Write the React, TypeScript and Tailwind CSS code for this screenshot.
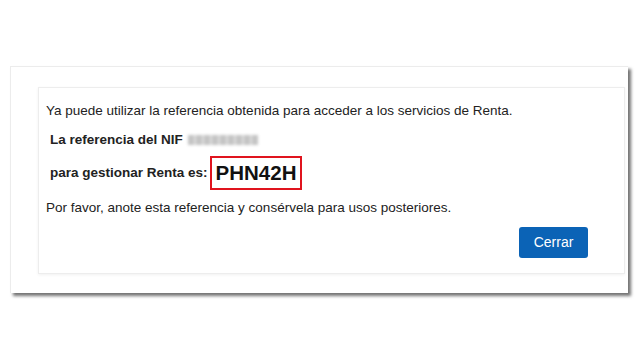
export default function App() {
  return (
    <div className="w-[640px] h-[360px] bg-white font-['Liberation_Sans',Arial,sans-serif] text-[#222]">
      <div className="pt-[66px] pl-[10px]">
        <div className="w-[618px] h-[227px] bg-white border-t border-l border-[#ececec] shadow-[3px_3px_3px_rgba(0,0,0,0.55)] pt-[20px] pl-[27px] pr-[3px]">
          <div className="h-[187px] border border-[#ededed] shadow-[0_1px_3px_rgba(0,0,0,0.06)] pl-[7px] pr-[36px] pt-[15px]">
            <p className="text-[13.5px] leading-[16px]">
              Ya puede utilizar la referencia obtenida para acceder a los servicios de Renta.
            </p>
            <div className="mt-[13px] flex items-center pl-[4px] text-[13.5px] font-bold leading-[16px]">
              <span>La referencia del NIF</span>
              <span className="ml-[5px] h-[10px] w-[70px] bg-[repeating-linear-gradient(90deg,#c4c4c4_0px,#c4c4c4_6px,#dedede_6px,#dedede_8px)] blur-[1.5px]" />
            </div>
            <div className="mt-[8px] flex items-center pl-[4px]">
              <span className="text-[13.5px] font-bold leading-[16px]">para gestionar Renta es:</span>
              <span className="ml-[2px] h-[34px] border-2 border-[#e0141e] px-[4px] flex items-center text-[20.5px] font-bold text-[#111] leading-none">
                PHN42H
              </span>
            </div>
            <p className="mt-[10px] text-[13.5px] leading-[16px]">
              Por favor, anote esta referencia y consérvela para usos posteriores.
            </p>
            <div className="mt-[11px] flex justify-end">
              <button className="h-[31px] w-[69px] rounded-[3px] bg-[#0b63b6] text-white text-[14px]">
                Cerrar
              </button>
            </div>
          </div>
        </div>
      </div>
    </div>
  );
}
